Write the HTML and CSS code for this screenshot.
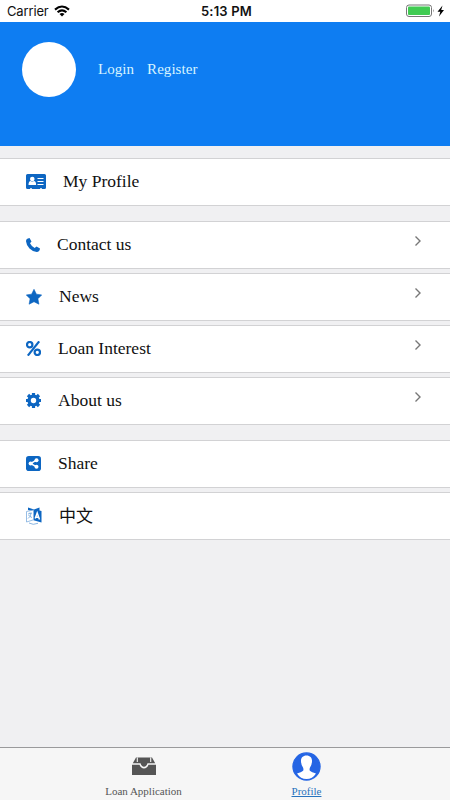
FILE: index.html
```html
<!DOCTYPE html>
<html lang="en">
<head>
<meta charset="utf-8">
<title>Profile</title>
<link rel="stylesheet" href="styles.css">
</head>
<body>
<div class="app">
  <div class="status">
    <div class="carrier"><span>Carrier</span>
      <svg width="16" height="12" viewBox="0 0 16 12"><g fill="none" stroke="#000" stroke-width="2.1"><path d="M1 4.6Q8-1.6 15 4.6"/><path d="M3.6 7.3Q8 3.4 12.4 7.3"/></g><path d="M5.5 9Q8 7 10.500 9L8 11.600z"/></svg>
    </div>
    <div class="time">5:13 PM</div>
    <div class="power">
      <svg width="40" height="14" viewBox="0 0 40 14"><rect x=".5" y="1" width="25" height="11.500" rx="2.500" fill="#fff" stroke="#777"/><rect x="2" y="2.500" width="22" height="8.500" rx="1" fill="#40cb52"/><path d="M27 5q1.500 1.800 0 3.500z" fill="#777"/><path d="M36.500 1.500L31.500 7.700H34.300L33 12.500L38 6H35.200z"/></svg>
    </div>
  </div>
  <header class="hero">
    <div class="avatar"></div>
    <a class="login">Login</a><a>Register</a>
  </header>
  <main class="menu">
    <section class="group">
      <div class="row"><svg class="icon" width="20" height="16" viewBox="0 0 20 16"><path fill="#0d66c2" d="M1.500 0h17q1.500 0 1.500 1.500V13.500q0 1.500-1.500 1.500H16v-.8h-2v.8H6v-.8H4v.8H1.500Q0 15 0 13.500v-12Q0 0 1.500 0z"/><circle cx="6.300" cy="5" r="2.300" fill="#fff"/><path fill="#fff" d="M2.500 11q0-3.800 2.300-4q1.500 1 3 0q2.300.2 2.300 4z"/><path stroke="#fff" stroke-width="1.100" d="M11.500 4.500H17.500M11.500 7.500H17.500M11.500 10.500H17.500"/></svg><span>My Profile</span></div>
    </section>
    <section class="group">
      <div class="row"><svg class="icon" width="14" height="14" viewBox="0 0 14 14"><path fill="#0d66c2" d="M3.500 0Q0 .500 0 3.200Q.4 7.400 3.500 10.500T10.700 14Q13.700 14 14 10.600L10.500 8.500L8.700 10.100Q5.500 8.400 4 5.300L5.500 3.600z"/></svg><span>Contact us</span><svg class="chev" width="8" height="12" viewBox="0 0 8 12"><path d="M1.500 1.500L6 6L1.500 10.500"/></svg></div>
      <div class="row"><svg class="icon" width="16" height="16" viewBox="0 0 16 16"><path fill="#0d66c2" stroke="#0d66c2" stroke-width=".6" stroke-linejoin="round" d="M8 .3L10.400 5.200L15.700 5.900L11.900 9.800L12.900 15.200L8 12.700L3.100 15.200L4.100 9.800L.3 5.900L5.600 5.200z"/></svg><span>News</span><svg class="chev" width="8" height="12" viewBox="0 0 8 12"><path d="M1.500 1.500L6 6L1.500 10.500"/></svg></div>
      <div class="row"><svg class="icon" width="15" height="15" viewBox="0 0 15 15"><g fill="none" stroke="#0d66c2" stroke-width="2.200"><circle cx="3.700" cy="3.700" r="2.700"/><circle cx="11.300" cy="11.300" r="2.700"/><path d="M13.200.4L1.800 14.600"/></g></svg><span>Loan Interest</span><svg class="chev" width="8" height="12" viewBox="0 0 8 12"><path d="M1.500 1.500L6 6L1.500 10.500"/></svg></div>
      <div class="row"><svg class="icon" width="15" height="15" viewBox="0 0 15 15"><circle cx="7.500" cy="7.500" r="4.400" fill="none" stroke="#0d66c2" stroke-width="3.400"/><path stroke="#0d66c2" stroke-width="3.200" d="M7.500 0V3M7.500 12v3M0 7.500H3M12 7.500h3M2 2L4 4M11 11L13 13M2 13L4 11M11 4L13 2"/></svg><span>About us</span><svg class="chev" width="8" height="12" viewBox="0 0 8 12"><path d="M1.500 1.500L6 6L1.500 10.500"/></svg></div>
    </section>
    <section class="group">
      <div class="row"><svg class="icon" width="15" height="15" viewBox="0 0 15 15"><rect width="15" height="15" rx="2.800" fill="#0d66c2"/><path fill="none" stroke="#fff" stroke-width="1.500" d="M10.500 4.200L4.600 7.500L10.500 10.800"/><g fill="#fff"><circle cx="10.500" cy="4.200" r="2"/><circle cx="4.600" cy="7.500" r="2"/><circle cx="10.500" cy="10.800" r="2"/></g></svg><span>Share</span></div>
      <div class="row lang"><svg class="icon" width="16" height="18" viewBox="0 0 16 18"><path fill="#0d66c2" d="M2 .5L8 2.500L13.500 .5V3.500L15.500 4V15.500L7.500 13.200V4.500L2 3z"/><path fill="#fff" stroke="#7dadde" stroke-width=".8" d="M.5 4.500L7.500 3V12.800L.5 15z"/><path fill="none" stroke="#5595d4" stroke-width=".7" d="M2 7L6 6M4 5.500V6.500M5 6.500Q4.500 10 2 11.500M2.500 8Q4 10 6 10.500"/><path fill="none" stroke="#fff" stroke-width="1.500" d="M9.200 11.500L11.200 6L13.500 12.500M10 10L12.800 10.600"/><path fill="none" stroke="#7dadde" stroke-width=".9" d="M3 16Q7 18.500 12 16.300"/></svg><span>中文</span></div>
    </section>
  </main>
  <nav class="tabs">
    <a class="tab loan"><svg width="24" height="18" viewBox="0 0 24 18"><path fill="#555" d="M0 7.700H7.500Q9 11.500 12 11.500T16.500 7.700H24V18H0z"/><path fill="#555" d="M4 .5H20L23.200 6.300H15.500Q14.500 9.700 12 9.700T8.500 6.300H.8z"/><path stroke="#f6f6f6" stroke-width="1.100" d="M5.300.5V5M18.700.5V5"/></svg><span>Loan Application</span></a>
    <a class="tab me"><svg width="29" height="29" viewBox="0 0 29 29"><circle cx="14.500" cy="14.500" r="13.600" fill="#2565e4" stroke="#2565e4" stroke-width="1.200"/><path fill="#fff" d="M14.500 3.500C10.600 3.500 8.700 6.200 9 9.500Q9.200 13 11 15.500Q12 18 10.800 19Q9.500 20.300 5 21.500Q8.500 27 14.500 27T24 21.500Q19.500 20.300 18.200 19Q17 18 18 15.500Q19.800 13 20 9.500C20.300 6.200 18.400 3.500 14.500 3.500z"/></svg><span>Profile</span></a>
  </nav>
</div>
</body>
</html>
```
FILE: styles.css
```css
* { box-sizing: border-box; }
body { margin: 0; background: #f0f0f2; font-family: "Liberation Serif", "Noto Sans CJK SC", serif; color: #111; }
svg { display: block; flex: none; }
.app { width: 450px; height: 800px; display: flex; flex-direction: column; overflow: hidden; }
.status { height: 22px; flex: none; display: grid; grid-template-columns: 1fr auto 1fr; align-items: center; background: #fff; padding: 0 4px 0 7px; font: 13px Inter, sans-serif; color: #111; }
.carrier { display: flex; align-items: center; gap: 5px; letter-spacing: -.15px; }
.time { font-weight: 600; letter-spacing: .2px; }
.power { justify-self: end; }
.hero { height: 124px; flex: none; background: #0e7df2; padding: 20px 22px 0; display: flex; color: #d7f4ff; font-size: 15px; line-height: 54px; letter-spacing: .05px; }
.avatar { width: 54px; height: 55px; border-radius: 50%; background: #fff; margin-right: 22px; }
.login { margin-right: 13px; }
.menu { flex: 1; padding-top: 12px; display: flex; flex-direction: column; gap: 15px; }
.group { display: flex; flex-direction: column; gap: 4px; }
.row { height: 48px; background: #fff; border: solid #d2d2d4; border-width: 1px 0; display: flex; align-items: center; padding: 0 28px 0 26px; gap: 17px; font-size: 17.5px; }
.icon { margin-bottom: 1px; }
.row span { margin-bottom: 1px; }
.lang { font-family: "Noto Sans CJK SC", sans-serif; font-size: 17px; line-height: 20px; }
.lang span { margin-bottom: 2px; }
.chev { margin: 0 0 8px auto; fill: none; stroke: #777; stroke-width: 1.4; }
.tabs { height: 53px; flex: none; background: #f6f6f6; border-top: 1px solid #9a9a9c; display: flex; justify-content: center; font-size: 11px; color: #555; }
.tab { width: 163px; display: flex; flex-direction: column; align-items: center; line-height: 14px; }
.loan svg { margin: 9px 0 9px; }
.me svg { margin: 4px 0 3px; }
.me { color: #2872bd; text-decoration: underline; }
```
